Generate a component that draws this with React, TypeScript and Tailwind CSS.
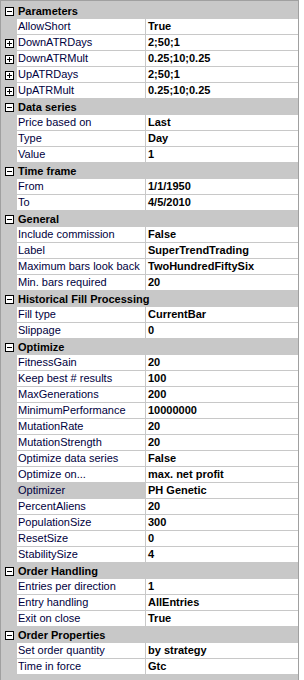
type Row = { name: string; value: string; expand?: boolean; selected?: boolean };
type Section = { title: string; rows: Row[] };

const sections: Section[] = [
  {
    title: 'Parameters',
    rows: [
      { name: 'AllowShort', value: 'True' },
      { name: 'DownATRDays', value: '2;50;1', expand: true },
      { name: 'DownATRMult', value: '0.25;10;0.25', expand: true },
      { name: 'UpATRDays', value: '2;50;1', expand: true },
      { name: 'UpATRMult', value: '0.25;10;0.25', expand: true },
    ],
  },
  {
    title: 'Data series',
    rows: [
      { name: 'Price based on', value: 'Last' },
      { name: 'Type', value: 'Day' },
      { name: 'Value', value: '1' },
    ],
  },
  {
    title: 'Time frame',
    rows: [
      { name: 'From', value: '1/1/1950' },
      { name: 'To', value: '4/5/2010' },
    ],
  },
  {
    title: 'General',
    rows: [
      { name: 'Include commission', value: 'False' },
      { name: 'Label', value: 'SuperTrendTrading' },
      { name: 'Maximum bars look back', value: 'TwoHundredFiftySix' },
      { name: 'Min. bars required', value: '20' },
    ],
  },
  {
    title: 'Historical Fill Processing',
    rows: [
      { name: 'Fill type', value: 'CurrentBar' },
      { name: 'Slippage', value: '0' },
    ],
  },
  {
    title: 'Optimize',
    rows: [
      { name: 'FitnessGain', value: '20' },
      { name: 'Keep best # results', value: '100' },
      { name: 'MaxGenerations', value: '200' },
      { name: 'MinimumPerformance', value: '10000000' },
      { name: 'MutationRate', value: '20' },
      { name: 'MutationStrength', value: '20' },
      { name: 'Optimize data series', value: 'False' },
      { name: 'Optimize on...', value: 'max. net profit' },
      { name: 'Optimizer', value: 'PH Genetic', selected: true },
      { name: 'PercentAliens', value: '20' },
      { name: 'PopulationSize', value: '300' },
      { name: 'ResetSize', value: '0' },
      { name: 'StabilitySize', value: '4' },
    ],
  },
  {
    title: 'Order Handling',
    rows: [
      { name: 'Entries per direction', value: '1' },
      { name: 'Entry handling', value: 'AllEntries' },
      { name: 'Exit on close', value: 'True' },
    ],
  },
  {
    title: 'Order Properties',
    rows: [
      { name: 'Set order quantity', value: 'by strategy' },
      { name: 'Time in force', value: 'Gtc' },
    ],
  },
];

function Glyph({ open }: { open: boolean }) {
  return (
    <span className="relative w-[9px] h-[9px] border border-[#000] bg-white block">
      <span className="absolute left-[1px] top-[3px] w-[5px] h-px bg-black" />
      {!open && <span className="absolute left-[3px] top-[1px] w-px h-[5px] bg-black" />}
    </span>
  );
}

export default function App() {
  return (
    <div className="w-[304px] h-[680px] bg-white font-['Liberation_Sans',Arial,sans-serif] text-[11px] leading-none text-black overflow-hidden">
      <div className="w-[299px] h-[680px] border-l border-r border-t border-[#a0a0a0] bg-[#c8c8c8] pt-[2px]">
        {sections.map((s) => (
          <div key={s.title}>
            <div className="flex h-[16px] items-center">
              <div className="w-[16px] flex justify-center">
                <Glyph open />
              </div>
              <span className="font-bold pl-[1px]">{s.title}</span>
            </div>
            {s.rows.map((r) => (
              <div key={r.name} className="flex h-[16px]">
                <div className="w-[16px] flex items-center justify-center">
                  {r.expand && <Glyph open={false} />}
                </div>
                <div
                  className={`w-[128px] h-[16px] border-b border-[#c8c8c8] flex items-center pl-[1px] overflow-hidden whitespace-nowrap text-[#000040] ${
                    r.selected ? 'bg-[#c8c8c8]' : 'bg-white'
                  }`}
                >
                  {r.name}
                </div>
                <div className="flex-1 h-[16px] border-l border-b border-[#c8c8c8] bg-white flex items-center pl-[2px] font-bold whitespace-nowrap overflow-hidden">
                  {r.value}
                </div>
              </div>
            ))}
          </div>
        ))}
      </div>
    </div>
  );
}
